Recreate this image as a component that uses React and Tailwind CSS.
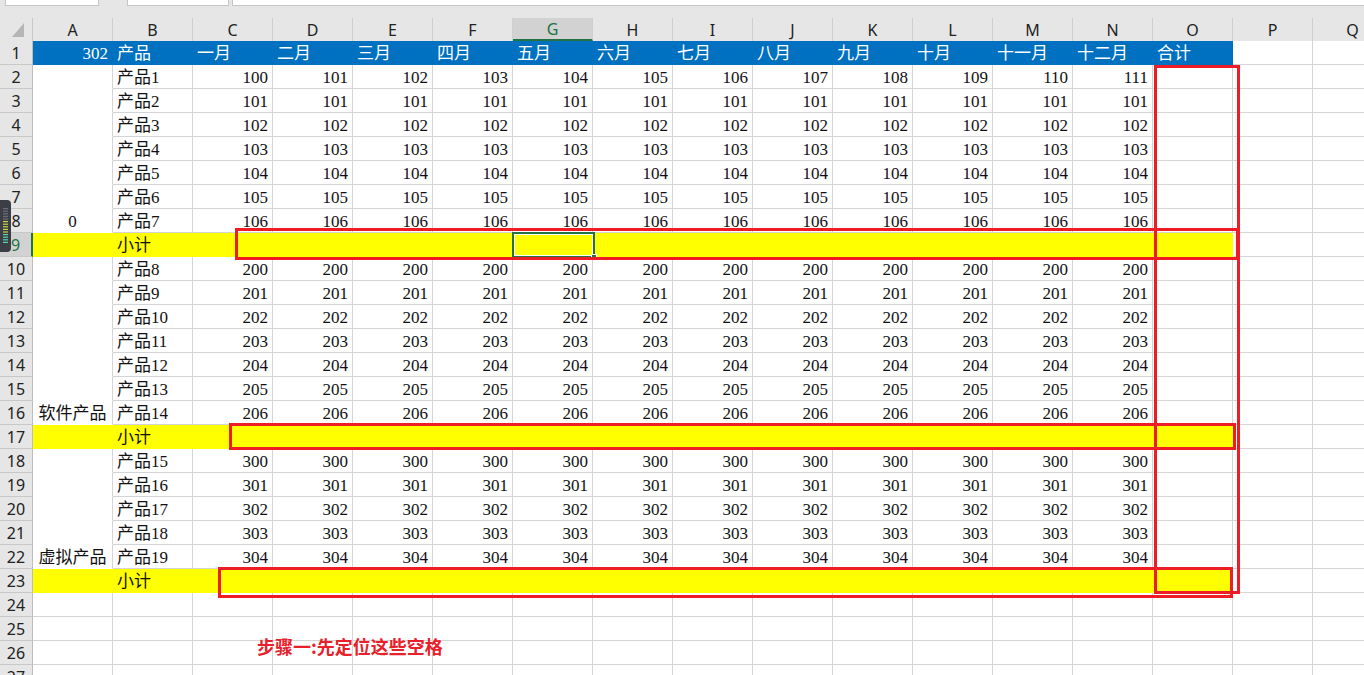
import React from 'react';

const COLS = ['A', 'B', 'C', 'D', 'E', 'F', 'G', 'H', 'I', 'J', 'K', 'L', 'M', 'N', 'O', 'P', 'Q'];
const MONTHS = ['一月', '二月', '三月', '四月', '五月', '六月', '七月', '八月', '九月', '十月', '十一月', '十二月'];

// 三个分组：每组若干产品行 + 一行小计
const GROUPS = [
  { start: 2, count: 7, base: 100, first: 1, label: '0' },
  { start: 10, count: 7, base: 200, first: 8, label: '软件产品' },
  { start: 18, count: 5, base: 300, first: 15, label: '虚拟产品' },
];
const SUBTOTAL_ROWS = [9, 17, 23];
const ROW_COUNT = 27;

const SERIF = { fontFamily: '"Liberation Serif", "Noto Sans CJK SC", serif' };
const UI = { fontFamily: '"Noto Sans", "Liberation Sans", sans-serif' };

function findGroup(r) {
  return GROUPS.find((g) => r >= g.start && r < g.start + g.count);
}

function getCell(r, c) {
  // 返回 { text, align, fill, hideBottom }
  if (r === 1) {
    if (c > 14) return { text: '' };
    let text = '';
    if (c === 0) text = '302';
    else if (c === 1) text = '产品';
    else if (c <= 13) text = MONTHS[c - 2];
    else text = '合计';
    return { text, align: c === 0 ? 'right' : 'left', fill: 'blue' };
  }
  if (SUBTOTAL_ROWS.includes(r)) {
    if (c > 14) return { text: '' };
    return { text: c === 1 ? '小计' : '', align: 'left', fill: 'yellow' };
  }
  const g = findGroup(r);
  if (g) {
    const i = r - g.start;
    if (c === 0) {
      const last = i === g.count - 1;
      return { text: last ? g.label : '', align: 'center', hideBottom: true };
    }
    if (c === 1) return { text: `产品${g.first + i}`, align: 'left' };
    if (c >= 2 && c <= 13) {
      const v = r === 2 ? 100 + (c - 2) : g.base + i;
      return { text: String(v), align: 'right' };
    }
  }
  return { text: '' };
}

function Cell({ r, c }) {
  const cell = getCell(r, c);
  let cls = 'h-[24px] border-r border-b flex items-end px-[4px] leading-[20px] text-[17px] whitespace-nowrap overflow-hidden ';
  if (cell.fill === 'blue') cls += 'bg-[#0070c0] border-[#0070c0] text-white ';
  else if (cell.fill === 'yellow') cls += 'bg-[#ffff00] border-[#ffff00] text-[#111] ';
  else if (cell.hideBottom) cls += 'bg-white border-r-[#d4d4d4] border-b-white text-[#111] ';
  else cls += 'bg-white border-[#d4d4d4] text-[#111] ';
  if (cell.align === 'right') cls += 'justify-end ';
  else if (cell.align === 'center') cls += 'justify-center ';
  return (
    <div className={cls} style={SERIF}>
      {cell.text}
    </div>
  );
}

function RowHeader({ r }) {
  const active = r === 9;
  return (
    <div
      className={`h-[24px] border-b border-[#c8c8c8] flex items-center justify-center text-[16px] ${
        active
          ? 'bg-[#d2d2d2] text-[#217346] border-r-2 border-r-[#217346]'
          : 'bg-[#e6e6e6] text-[#222] border-r border-r-[#bdbdbd]'
      }`}
      style={UI}
    >
      {r}
    </div>
  );
}

function ColumnHeaders() {
  return (
    <>
      <div className="h-[23px] bg-[#e6e6e6] border-r border-[#c8c8c8] relative">
        <svg className="absolute left-[12px] top-[5px]" width="12" height="14" viewBox="0 0 12 14">
          <polygon points="12,0 12,14 0,14" fill="#b5b5b5" />
        </svg>
      </div>
      {COLS.map((col) => {
        const active = col === 'G';
        return (
          <div
            key={col}
            className={`h-[23px] flex items-center justify-center text-[16px] border-r border-[#cfcfcf] ${
              active
                ? 'bg-[#d2d2d2] text-[#217346] border-b-2 border-b-[#217346]'
                : 'bg-[#e6e6e6] text-[#222]'
            }`}
            style={UI}
          >
            {col}
          </div>
        );
      })}
    </>
  );
}

function RedBox({ className }) {
  return <div className={`absolute border-[3px] border-[#ee1c25] pointer-events-none ${className}`} />;
}

export default function App() {
  const rows = Array.from({ length: ROW_COUNT }, (_, i) => i + 1);

  return (
    <div className="relative w-[1364px] h-[675px] overflow-hidden bg-[#e6e6e6]">
      {/* 顶部名称框 / 编辑栏 */}
      <div className="h-[18px] flex items-start gap-0">
        <div className="ml-[5px] w-[94px] h-[6px] bg-white border border-t-0 border-[#c6c6c6]" />
        <div className="ml-[28px] w-[102px] h-[6px] bg-white border border-t-0 border-[#c6c6c6]" />
        <div className="ml-[3px] flex-1 h-[6px] bg-white border border-t-0 border-r-0 border-[#c6c6c6]" />
      </div>

      <div className="grid grid-cols-[33px_repeat(17,80px)]">
        <ColumnHeaders />
        {rows.map((r) => (
          <React.Fragment key={r}>
            <RowHeader r={r} />
            {COLS.map((col, c) => (
              <Cell key={col} r={r} c={c} />
            ))}
          </React.Fragment>
        ))}
      </div>

      {/* 当前选中单元格 G9 */}
      <div className="absolute left-[512px] top-[232px] w-[83px] h-[26px] border-2 border-[#217346]">
        <div className="w-full h-full border border-white" />
        <div className="absolute right-[-4px] bottom-[-4px] w-[6px] h-[6px] bg-[#217346] border border-white" />
      </div>

      {/* 标注框 */}
      <RedBox className="left-[1154px] top-[65px] w-[86px] h-[529px]" />
      <RedBox className="left-[235px] top-[228px] w-[1004px] h-[32px]" />
      <RedBox className="left-[229px] top-[423px] w-[1007px] h-[27px]" />
      <RedBox className="left-[218px] top-[567px] w-[1015px] h-[31px]" />

      <div
        className="absolute left-[257px] top-[633px] text-[18px] font-bold text-[#e8202a] whitespace-nowrap"
        style={{ fontFamily: '"Noto Sans CJK SC", sans-serif' }}
      >
        步骤一:先定位这些空格
      </div>

      {/* 左侧浮动小部件 */}
      <svg className="absolute left-0 top-[200px]" width="11" height="52" viewBox="0 0 11 52">
        <rect x="-4" y="0" width="15" height="52" rx="4" fill="#3b3e44" />
        {Array.from({ length: 14 }, (_, i) => (
          <rect
            key={i}
            x="3"
            y={8 + i * 2.6}
            width="5"
            height="1.2"
            fill={i < 5 ? '#6b6e74' : i < 10 ? '#c9d24a' : '#5fd3b0'}
          />
        ))}
      </svg>
    </div>
  );
}
